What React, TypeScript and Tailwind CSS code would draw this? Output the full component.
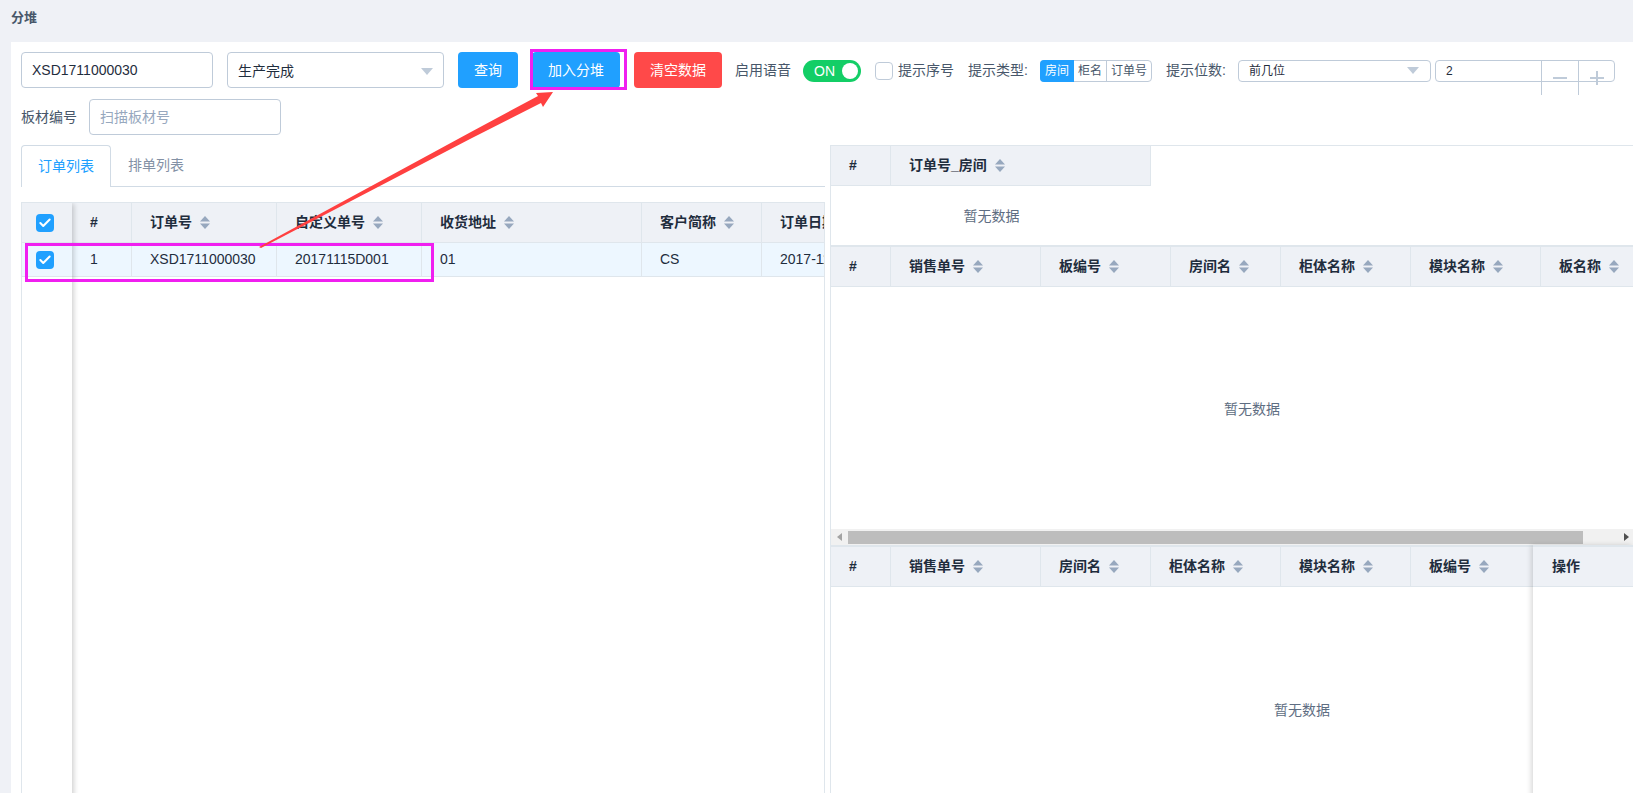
import { Check } from 'lucide-react';

const leftCols = [
  { label: '#', width: 'w-[60px]' },
  { label: '订单号', width: 'w-[145px]', sort: true },
  { label: '自定义单号', width: 'w-[145px]', sort: true },
  { label: '收货地址', width: 'w-[220px]', sort: true },
  { label: '客户简称', width: 'w-[120px]', sort: true },
  { label: '订单日期', width: 'w-[120px]', sort: true },
];

const leftRow = [
  { text: '1', width: 'w-[60px]' },
  { text: 'XSD1711000030', width: 'w-[145px]' },
  { text: '20171115D001', width: 'w-[145px]' },
  { text: '01', width: 'w-[220px]' },
  { text: 'CS', width: 'w-[120px]' },
  { text: '2017-11-15', width: 'w-[120px]' },
];

const pieceCols = [
  { label: '#', width: 'w-[60px]' },
  { label: '销售单号', width: 'w-[150px]', sort: true },
  { label: '板编号', width: 'w-[130px]', sort: true },
  { label: '房间名', width: 'w-[110px]', sort: true },
  { label: '柜体名称', width: 'w-[130px]', sort: true },
  { label: '模块名称', width: 'w-[130px]', sort: true },
  { label: '板名称', width: 'w-[120px]', sort: true },
];

const stackCols = [
  { label: '#', width: 'w-[60px]' },
  { label: '销售单号', width: 'w-[150px]', sort: true },
  { label: '房间名', width: 'w-[110px]', sort: true },
  { label: '柜体名称', width: 'w-[130px]', sort: true },
  { label: '模块名称', width: 'w-[130px]', sort: true },
  { label: '板编号', width: 'w-[122px]', sort: true },
];

function SortIcon() {
  return (
    <svg className="ml-2 shrink-0" width="10" height="13" viewBox="0 0 10 13">
      <path d="M5 0 L10 5.5 L0 5.5 Z" fill="#97a8be" />
      <path d="M5 13 L10 7.5 L0 7.5 Z" fill="#97a8be" />
    </svg>
  );
}

function Arrow({ color }: { color: string }) {
  return (
    <svg className="shrink-0" width="12" height="7" viewBox="0 0 12 7">
      <path d="M0 0 L12 0 L6 7 Z" fill={color} />
    </svg>
  );
}

function HeadCell({ label, width, sort, last }: { label: string; width: string; sort?: boolean; last?: boolean }) {
  return (
    <div className={`${width} shrink-0 h-full flex items-center pl-[18px] border-[#dfe6ec] font-bold text-[#1f2d3d] whitespace-nowrap ${last ? '' : 'border-r'}`}>
      {label}
      {sort && <SortIcon />}
    </div>
  );
}

function Tick() {
  return (
    <div className="ml-[14px] w-[18px] h-[18px] rounded-[4px] bg-[#20a0ff] flex items-center justify-center">
      <Check className="w-[14px] h-[14px] text-white" strokeWidth={3.5} />
    </div>
  );
}

function Empty({ width, height }: { width: string; height: string }) {
  return <div className={`${width} ${height} shrink-0 flex items-center justify-center pt-[2px] text-[#5e6d82]`}>暂无数据</div>;
}

export default function App() {
  return (
    <div className="relative w-[1633px] h-[793px] overflow-hidden bg-[#eff1f6] text-[14px] text-[#1f2d3d] font-['Liberation_Sans','Noto_Sans_CJK_SC',sans-serif]">
      <div className="h-[42px] pl-[11px] pb-[6px] flex items-center text-[13px] font-bold text-[#48576a]">分堆</div>

      <div className="ml-[11px] h-[751px] bg-white pt-[10px] overflow-hidden">
        {/* Toolbar */}
        <div className="flex items-center h-[36px] pl-[10px] whitespace-nowrap">
          <div className="w-[192px] h-[36px] flex items-center pl-[10px] border border-[#bfcbd9] rounded-[4px]">XSD1711000030</div>
          <div className="ml-[14px] w-[217px] h-[36px] flex items-center justify-between pl-[10px] pr-[10px] pt-[2px] border border-[#bfcbd9] rounded-[4px]">
            生产完成
            <Arrow color="#bfcbd9" />
          </div>
          <button className="ml-[14px] w-[60px] h-[36px] rounded-[4px] bg-[#20a0ff] text-white">查询</button>
          <button className="ml-[14px] w-[88px] h-[36px] rounded-[4px] bg-[#20a0ff] text-white">加入分堆</button>
          <button className="ml-[14px] w-[88px] h-[36px] rounded-[4px] bg-[#ff4949] text-white">清空数据</button>
          <span className="ml-[13px] w-[56px] pt-[1px] text-[#48576a]">启用语音</span>
          <div className="ml-[12px] mt-[2px] w-[58px] h-[22px] rounded-full bg-[#13ce66] flex items-center justify-between pl-[11px] pr-[3px] text-white">
            ON
            <div className="w-[16px] h-[16px] rounded-full bg-white" />
          </div>
          <div className="ml-[14px] mt-[2px] w-[18px] h-[18px] rounded-[4px] border border-[#bfcbd9]" />
          <span className="ml-[5px] w-[56px] pt-[1px] text-[#48576a]">提示序号</span>
          <span className="ml-[14px] w-[60px] pt-[1px] text-[#48576a]">提示类型:</span>
          <div className="ml-[12px] mt-[2px] w-[112px] h-[22px] flex text-[12px] text-[#48576a] border border-[#bfcbd9] rounded-[4px]">
            <div className="-m-px mr-0 w-[34px] h-[22px] flex items-center justify-center bg-[#20a0ff] text-white rounded-l-[4px]">房间</div>
            <div className="w-[33px] flex items-center justify-center border-r border-[#bfcbd9]">柜名</div>
            <div className="flex-1 flex items-center justify-center">订单号</div>
          </div>
          <span className="ml-[14px] w-[60px] pt-[1px] text-[#48576a]">提示位数:</span>
          <div className="ml-[12px] mt-[1px] w-[193px] h-[22px] flex items-center justify-between pl-[10px] pr-[11px] text-[12px] border border-[#bfcbd9] rounded-[4px]">
            前几位
            <Arrow color="#bfcbd9" />
          </div>
          <div className="relative ml-[4px] mt-[2px] w-[180px] h-[22px] flex items-center pl-[10px] text-[12px] border border-[#bfcbd9] rounded-[4px]">
            2
            <div className="absolute left-[105px] -top-px flex">
              <div className="w-[37px] h-[35px] flex items-center justify-center border-l border-[#bfcbd9]">
                <div className="w-[14px] h-[2px] bg-[#bfcbd9]" />
              </div>
              <div className="relative w-[37px] h-[35px] flex items-center justify-center border-l border-[#bfcbd9]">
                <div className="w-[14px] h-[2px] bg-[#bfcbd9]" />
                <div className="absolute w-[2px] h-[14px] bg-[#bfcbd9]" />
              </div>
            </div>
          </div>
        </div>

        <div className="mt-[11px] flex items-center h-[36px] pl-[10px]">
          <span className="w-[56px] text-[#48576a]">板材编号</span>
          <div className="ml-[12px] w-[192px] h-[36px] flex items-center pl-[10px] border border-[#bfcbd9] rounded-[4px] text-[#97a8be]">扫描板材号</div>
        </div>

        <div className="mt-[10px] flex h-[658px]">
          {/* Left: order list */}
          <div className="ml-[10px] w-[804px] shrink-0 flex flex-col">
            <div className="h-[42px] shrink-0 flex border-b border-[#d1dbe5]">
              <div className="w-[90px] h-[42px] flex items-center justify-center bg-white border border-b-0 border-[#d1dbe5] rounded-t-[4px] text-[#20a0ff]">订单列表</div>
              <div className="w-[90px] flex items-center justify-center text-[#8391a5]">排单列表</div>
            </div>
            <div className="mt-[15px] flex-1 flex border border-[#dfe6ec] overflow-hidden">
              <div className="relative z-10 w-[50px] shrink-0 bg-white shadow-[3px_0_5px_-1px_rgba(0,0,0,0.18)]">
                <div className="h-[40px] bg-[#eef1f6] border-b border-[#dfe6ec] flex items-center">
                  <Tick />
                </div>
                <div className="h-[34px] bg-[#edf7ff] border-b border-[#dfe6ec] flex items-center">
                  <Tick />
                </div>
              </div>
              <div className="flex-1 min-w-0 overflow-hidden">
                <div className="h-[40px] flex bg-[#eef1f6] border-b border-[#dfe6ec]">
                  {leftCols.map(col => (
                    <HeadCell key={col.label} {...col} />
                  ))}
                </div>
                <div className="h-[34px] flex bg-[#edf7ff] border-b border-[#dfe6ec]">
                  {leftRow.map(cell => (
                    <div key={cell.text} className={`${cell.width} shrink-0 flex items-center pl-[18px] border-r border-[#dfe6ec] whitespace-nowrap`}>
                      {cell.text}
                    </div>
                  ))}
                </div>
              </div>
            </div>
          </div>

          {/* Right: stacks */}
          <div className="ml-[5px] flex-1 min-w-0 border-l border-t border-[#dfe6ec] overflow-hidden">
            <div className="h-[40px] w-[320px] flex bg-[#eef1f6] border-b border-r border-[#dfe6ec]">
              <HeadCell label="#" width="w-[60px]" />
              <HeadCell label="订单号_房间" width="w-[259px]" sort last />
            </div>
            <Empty width="w-[321px]" height="h-[59px]" />

            <div className="h-[42px] flex bg-[#eef1f6] border-t-2 border-b border-[#dfe6ec] overflow-hidden">
              {pieceCols.map(col => (
                <HeadCell key={col.label} {...col} />
              ))}
            </div>
            <Empty width="w-[842px]" height="h-[242px]" />

            <div className="h-[16px] flex items-center bg-[#f1f1f1]">
              <svg className="ml-[6px] shrink-0" width="5" height="8" viewBox="0 0 5 8">
                <path d="M5 0 L0 4 L5 8 Z" fill="#a3a3a3" />
              </svg>
              <div className="ml-[6px] w-[735px] h-[13px] bg-[#bdbdbd]" />
              <svg className="ml-[41px] shrink-0" width="5" height="8" viewBox="0 0 5 8">
                <path d="M0 0 L5 4 L0 8 Z" fill="#505050" />
              </svg>
            </div>

            <div className="flex">
              <div className="flex-1 min-w-0 overflow-hidden">
                <div className="h-[42px] flex bg-[#eef1f6] border-t-2 border-b border-[#dfe6ec]">
                  {stackCols.map(col => (
                    <HeadCell key={col.label} {...col} last={col.label === '板编号'} />
                  ))}
                </div>
                <Empty width="w-[942px]" height="h-[244px]" />
              </div>
              <div className="w-[100px] shrink-0 relative z-10 bg-white shadow-[-2px_0_5px_rgba(0,0,0,0.15)]">
                <div className="h-[42px] flex items-center pl-[19px] bg-[#eef1f6] border-t-2 border-b border-[#dfe6ec] font-bold">操作</div>
              </div>
            </div>
          </div>
        </div>
      </div>

      {/* Annotations drawn over the page */}
      <div className="absolute z-20 left-[25px] top-[243px] w-[409px] h-[39px] border-[3px] border-[#f01ff0]" />
      <div className="absolute z-20 left-[530px] top-[49px] w-[97px] h-[41px] border-[3px] border-[#f01ff0]" />
      <svg className="absolute z-20 left-0 top-0 pointer-events-none" width="1633" height="793" viewBox="0 0 1633 793">
        <polygon points="259,247 470,132.5 538,96 536,93 553,92 543,107 541,103 470,139 261,248" fill="#ff4040" />
      </svg>
    </div>
  );
}
